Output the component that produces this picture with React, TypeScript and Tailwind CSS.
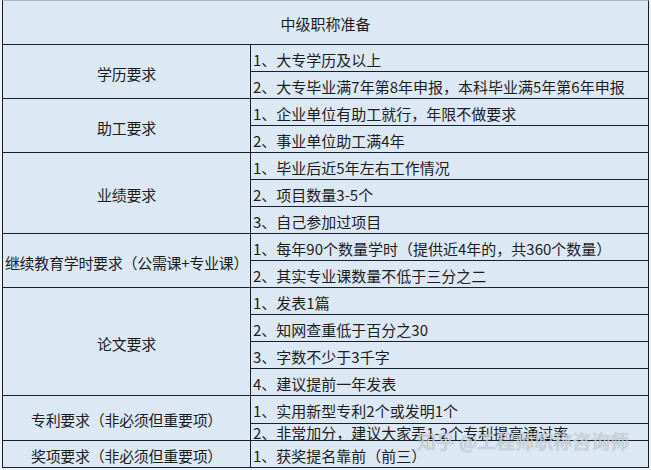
import React from "react";

const font = { fontFamily: '"Noto Sans CJK SC", "Noto Sans", sans-serif' };

type Group = { title: string; span: string; items: string[] };

const groups: Group[] = [
  { title: "学历要求", span: "row-span-2", items: ["1、大专学历及以上", "2、大专毕业满7年第8年申报，本科毕业满5年第6年申报"] },
  { title: "助工要求", span: "row-span-2", items: ["1、企业单位有助工就行，年限不做要求", "2、事业单位助工满4年"] },
  { title: "业绩要求", span: "row-span-3", items: ["1、毕业后近5年左右工作情况", "2、项目数量3-5个", "3、自己参加过项目"] },
  { title: "继续教育学时要求（公需课+专业课）", span: "row-span-2", items: ["1、每年90个数量学时（提供近4年的，共360个数量）", "2、其实专业课数量不低于三分之二"] },
  { title: "论文要求", span: "row-span-4", items: ["1、发表1篇", "2、知网查重低于百分之30", "3、字数不少于3千字", "4、建议提前一年发表"] },
  { title: "专利要求（非必须但重要项）", span: "row-span-2", items: ["1、实用新型专利2个或发明1个", "2、非常加分，建议大家弄1-2个专利提高通过率"] },
  { title: "奖项要求（非必须但重要项）", span: "row-span-1", items: ["1、获奖提名靠前（前三）"] },
];

export default function App() {
  return (
    <div className="relative w-[651px] h-[470px] bg-[#eef3f8] pl-[2px] text-[#1d1d1d]" style={font}>
      <div className="grid w-[647px] grid-cols-[247px_397px] grid-rows-[43px_repeat(13,26px)_27px_16px_26px] gap-px bg-[#18202c] border-t border-t-[#aab5c1] border-x border-b border-x-[#18202c] border-b-[#18202c] text-[15px] leading-none">
        <div className="col-span-2 flex items-center justify-center bg-[#dce8f4] pt-[2px]">中级职称准备</div>
        {groups.map((g) => (
          <React.Fragment key={g.title}>
            <div className={`${g.span} col-start-1 flex items-center justify-center whitespace-nowrap bg-[#dce8f4] pt-[3px] tracking-[-0.3px]`}>
              {g.title}
            </div>
            {g.items.map((it, i) => (
              <div
                key={it}
                className={
                  g.title.startsWith("专利") && i === 1
                    ? "col-start-2 flex items-start overflow-hidden whitespace-nowrap bg-[#dce8f4] pl-[2px] pt-[1px]"
                    : "col-start-2 flex items-center whitespace-nowrap bg-[#dce8f4] pl-[2px] pt-[2px]"
                }
              >
                {it}
              </div>
            ))}
          </React.Fragment>
        ))}
      </div>
      <div
        className="absolute left-[417px] top-[431px] whitespace-nowrap text-[19px] leading-none text-[#eef2f6]/70"
        style={{ textShadow: "0 0 1px rgba(90,100,110,0.7)" }}
      >
        知乎 @工程师职称咨询师
      </div>
    </div>
  );
}
